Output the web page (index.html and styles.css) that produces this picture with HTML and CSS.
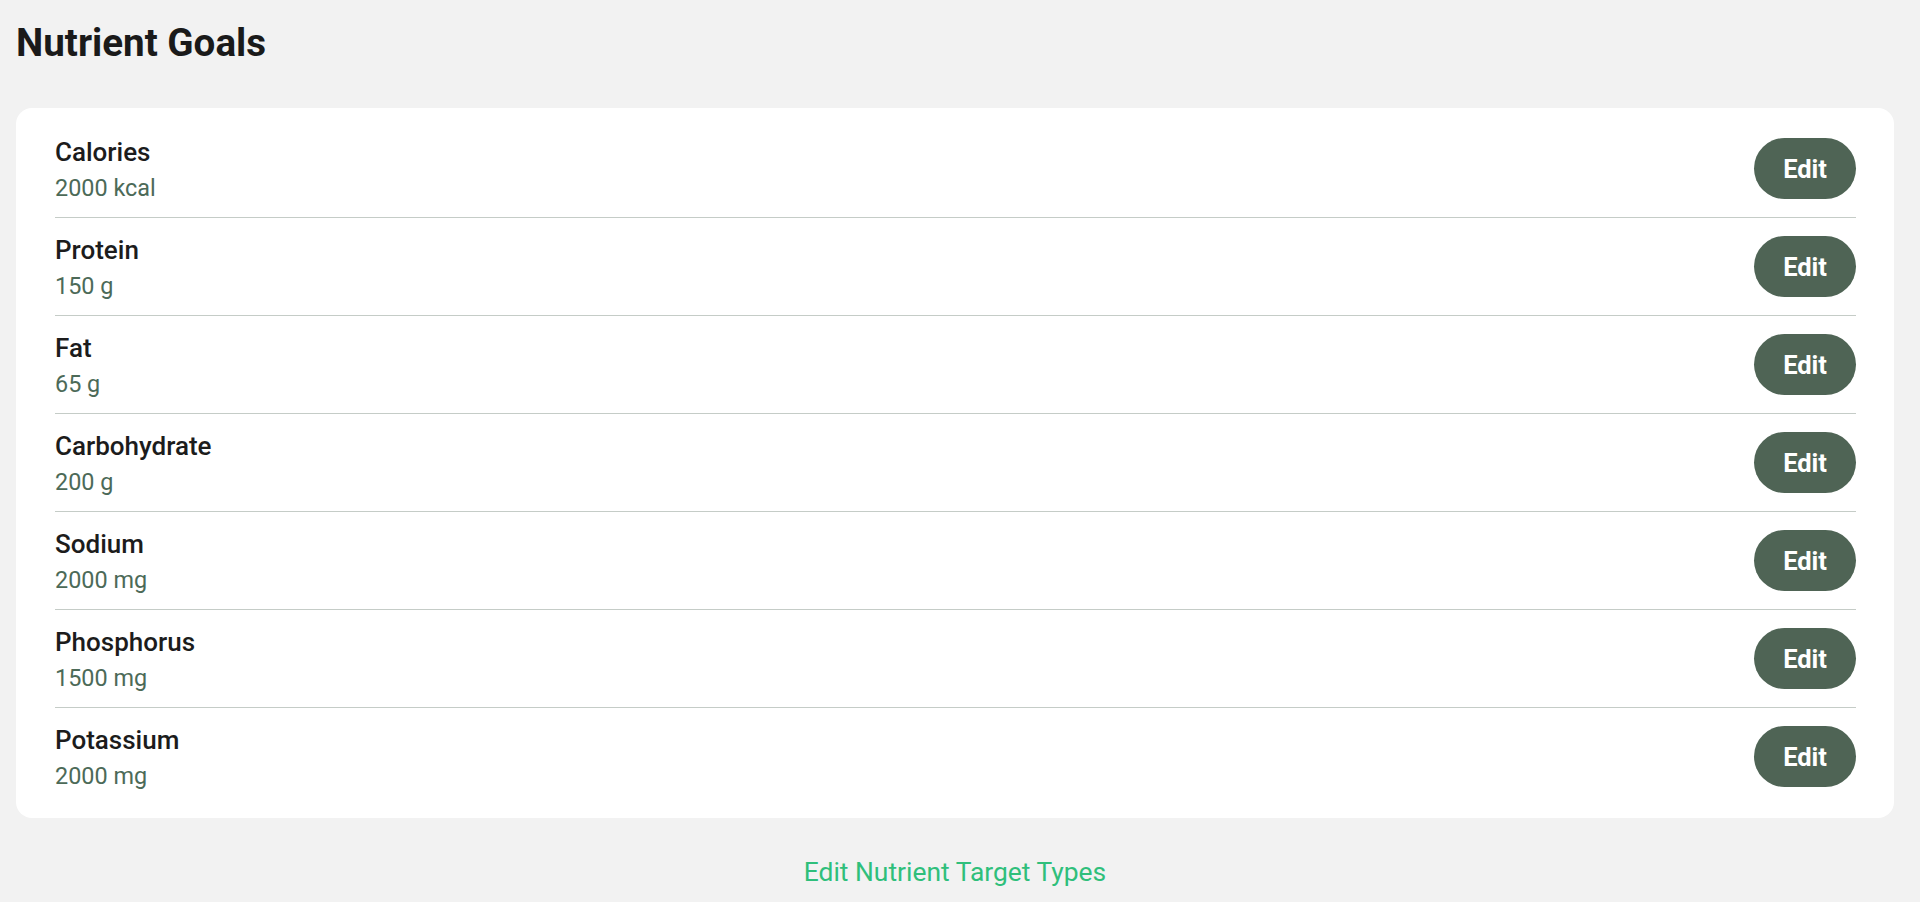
FILE: index.html
```html
<!DOCTYPE html>
<html lang="en">
<head>
<meta charset="utf-8">
<title>Nutrient Goals</title>
<link rel="stylesheet" href="styles.css">
</head>
<body>
<main class="page">
  <h1 class="page-title">Nutrient Goals</h1>
  <section class="card">
    <div class="goal-row">
      <div class="goal-info"><div class="goal-name">Calories</div><div class="goal-value">2000 kcal</div></div>
      <button class="edit-btn" type="button">Edit</button>
    </div>
    <div class="goal-row">
      <div class="goal-info"><div class="goal-name">Protein</div><div class="goal-value">150 g</div></div>
      <button class="edit-btn" type="button">Edit</button>
    </div>
    <div class="goal-row">
      <div class="goal-info"><div class="goal-name">Fat</div><div class="goal-value">65 g</div></div>
      <button class="edit-btn" type="button">Edit</button>
    </div>
    <div class="goal-row">
      <div class="goal-info"><div class="goal-name">Carbohydrate</div><div class="goal-value">200 g</div></div>
      <button class="edit-btn" type="button">Edit</button>
    </div>
    <div class="goal-row">
      <div class="goal-info"><div class="goal-name">Sodium</div><div class="goal-value">2000 mg</div></div>
      <button class="edit-btn" type="button">Edit</button>
    </div>
    <div class="goal-row">
      <div class="goal-info"><div class="goal-name">Phosphorus</div><div class="goal-value">1500 mg</div></div>
      <button class="edit-btn" type="button">Edit</button>
    </div>
    <div class="goal-row">
      <div class="goal-info"><div class="goal-name">Potassium</div><div class="goal-value">2000 mg</div></div>
      <button class="edit-btn" type="button">Edit</button>
    </div>
  </section>
  <div class="footer-link"><a class="types-link" href="#">Edit Nutrient Target Types</a></div>
</main>
</body>
</html>
```

FILE: styles.css
```css
* { box-sizing: border-box; }

html, body {
  margin: 0;
  padding: 0;
  background: #f2f2f2;
}

body {
  font-family: Roboto, "Liberation Sans", Arial, sans-serif;
  color: #1b1b1b;
}

.page {
  padding: 20px 26px 0 16px;
}

.page-title {
  margin: 0;
  font-size: 38.6px;
  font-weight: 700;
  line-height: 45px;
  color: #1a1a1a;
}

.card {
  margin-top: 43px;
  background: #ffffff;
  border-radius: 16px;
  padding: 12px 38px 13px 39px;
}

.goal-row {
  display: flex;
  align-items: center;
  justify-content: space-between;
  height: 98px;
  border-bottom: 1px solid #c5ccc7;
}

.goal-row:last-child {
  border-bottom: none;
  height: 97px;
}

.goal-info {
  display: flex;
  flex-direction: column;
  gap: 7px;
  margin-top: 2px;
}

.goal-name {
  font-size: 26px;
  font-weight: 500;
  line-height: 31px;
  color: #1c1c1c;
}

.goal-value {
  font-size: 23.4px;
  font-weight: 400;
  line-height: 27px;
  color: #4c6a58;
}

.edit-btn {
  height: 61px;
  padding: 0 29px;
  border: none;
  border-radius: 31px;
  background: #4f6455;
  color: #ffffff;
  font-family: Roboto, "Liberation Sans", Arial, sans-serif;
  font-size: 25.5px;
  font-weight: 700;
  cursor: pointer;
}

.footer-link {
  margin-top: 39px;
  text-align: center;
}

.types-link {
  font-size: 26.4px;
  line-height: 31px;
  color: #2fbf7b;
  text-decoration: none;
}
```
